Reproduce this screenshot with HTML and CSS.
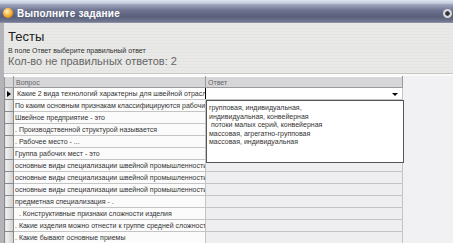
FILE: index.html
```html
<!DOCTYPE html>
<html lang="ru">
<head>
  <meta charset="UTF-8">
  <title>Выполните задание</title>
  <link rel="stylesheet" href="styles.css">
</head>
<body>
  <div class="top-strip"></div>
  <div class="titlebar">
    <span class="app-icon"></span>
    <span class="title">Выполните задание</span>
    <span class="close-btn"></span>
  </div>
  <div class="window">
    <div class="panel">
      <div class="panel-title">Тесты</div>
      <div class="panel-hint">В поле Ответ выберите правильный ответ</div>
      <div class="panel-count">Кол-во не правильных ответов: 2</div>
    </div>
    <div class="grid-area">
      <table class="grid">
        <colgroup>
          <col class="c-ind">
          <col class="c-q">
          <col class="c-a">
        </colgroup>
        <thead>
          <tr>
            <th class="ind"></th>
            <th>Вопрос</th>
            <th>Ответ</th>
          </tr>
        </thead>
        <tbody>
          <tr class="current">
            <td class="ind"><span class="pointer"></span></td>
            <td class="q">&nbsp;Какие 2 вида технологий характерны для швейной отрасли</td>
            <td class="a combo"><span class="combo-arrow"></span></td>
          </tr>
          <tr><td class="ind"></td><td class="q">По каким основным признакам классифицируются рабочие места</td><td class="a"></td></tr>
          <tr><td class="ind"></td><td class="q">Швейное предприятие - это</td><td class="a"></td></tr>
          <tr><td class="ind"></td><td class="q">. Производственной структурой называется</td><td class="a"></td></tr>
          <tr><td class="ind"></td><td class="q">. Рабочее место - ...</td><td class="a"></td></tr>
          <tr><td class="ind"></td><td class="q">Группа рабочих мест - это</td><td class="a"></td></tr>
          <tr><td class="ind"></td><td class="q">основные виды специализации швейной промышленности</td><td class="a"></td></tr>
          <tr><td class="ind"></td><td class="q">основные виды специализации швейной промышленности</td><td class="a"></td></tr>
          <tr><td class="ind"></td><td class="q">основные виды специализации швейной промышленности</td><td class="a"></td></tr>
          <tr><td class="ind"></td><td class="q">предметная специализация - .</td><td class="a"></td></tr>
          <tr><td class="ind"></td><td class="q">&nbsp;&nbsp;. Конструктивные признаки сложности изделия</td><td class="a"></td></tr>
          <tr><td class="ind"></td><td class="q">. Какие изделия можно отнести к группе средней сложности</td><td class="a"></td></tr>
          <tr><td class="ind"></td><td class="q">. Какие бывают основные приемы</td><td class="a"></td></tr>
        </tbody>
      </table>
      <ul class="dropdown">
        <li>групповая, индивидуальная,</li>
        <li>индивидуальная, конвейерная</li>
        <li>&nbsp;потоки малых серий, конвейерная</li>
        <li>массовая, агрегатно-групповая</li>
        <li>массовая, индивидуальная</li>
      </ul>
    </div>
  </div>
</body>
</html>
```

FILE: styles.css
```css
body {
  margin: 0;
  width: 453px;
  height: 243px;
  overflow: hidden;
  background-color: #f1f1f3;
  font-family: "Liberation Sans", Arial, sans-serif;
}

.top-strip {
  height: 4px;
  background: linear-gradient(#dfe6f2, #b9c4d8);
}

.titlebar {
  height: 18px;
  display: flex;
  align-items: center;
  padding-left: 3px;
  background: linear-gradient(#a4aac0, #6e7490 35%, #5a607a 70%, #737992);
  border-bottom: 1px solid #8a8fa3;
}

.app-icon {
  width: 10px;
  height: 10px;
  border-radius: 50%;
  background: radial-gradient(circle at 40% 35%, #fff3c0, #f4a826 55%, #c06a10);
  margin-right: 4px;
}

.title {
  color: #fff;
  font-size: 10px;
  font-weight: bold;
  letter-spacing: 0.2px;
  flex: 1;
}

.close-btn {
  width: 9px;
  height: 9px;
  border-radius: 50%;
  background: radial-gradient(circle, #333 30%, #d8d8e0 40%);
  margin-right: 1px;
}

.window {
  border-left: 4px solid #b4b4b8;
}

.panel {
  height: 51px;
  padding: 7px 0 0 4px;
  box-sizing: border-box;
  background: repeating-linear-gradient(#e9e9e7 0, #e9e9e7 2px, #e4e4e2 2px, #e4e4e2 3px);
  border-bottom: 1px solid #c6c6c6;
}

.panel-title {
  font-size: 13px;
  color: #1e1e1e;
  line-height: 14px;
}

.panel-hint {
  font-size: 7px;
  color: #333;
  line-height: 9px;
  margin-top: 2px;
}

.panel-count {
  font-size: 11px;
  color: #666;
  line-height: 13px;
}

.grid-area {
  position: relative;
  border-top: 2px solid #fafafa;
}

.grid {
  border-collapse: collapse;
  table-layout: fixed;
  width: 398px;
  font-size: 7px;
  color: #333;
  border-right: 1px solid #8c8c8c;
}

.c-ind { width: 9px; }
.c-q { width: 192px; }
.c-a { width: 197px; }

.grid th {
  height: 10px;
  padding: 0 0 0 2px;
  text-align: left;
  font-weight: normal;
  color: #666;
  background: #d6d6d8;
  border: 1px solid #9a9a9a;
  border-top-color: #fff;
}

.grid td {
  height: 11px;
  padding: 0 0 0 1px;
  white-space: nowrap;
  overflow: hidden;
  border-bottom: 1px solid #c4c4c4;
  border-right: 1px solid #c4c4c4;
}

.grid td.ind {
  padding: 0;
  background: linear-gradient(90deg, #f2f2f2, #cfcfcf);
  border: 1px solid #8a8a8a;
}

.pointer {
  display: block;
  width: 0;
  height: 0;
  margin-left: 2px;
  border-top: 3px solid transparent;
  border-bottom: 3px solid transparent;
  border-left: 4px solid #000;
}

.grid td.q {
  background: #fbfbfb;
}

.grid td.a {
  background: #eeeef0;
}

.grid tr.current td.q {
  background: #fff;
  border-right: 1px solid #000;
}

.grid td.combo {
  background: #fff;
  text-align: right;
  padding-right: 4px;
}

.combo-arrow {
  display: inline-block;
  width: 0;
  height: 0;
  border-left: 3px solid transparent;
  border-right: 3px solid transparent;
  border-top: 3px solid #000;
  vertical-align: middle;
}

.dropdown {
  position: absolute;
  left: 202px;
  top: 24px;
  width: 194px;
  height: 58px;
  margin: 0;
  padding: 3px 0 0 2px;
  list-style: none;
  background: #fff;
  border: 1px solid #555;
  font-size: 7px;
  line-height: 8.5px;
  color: #333;
}
```
